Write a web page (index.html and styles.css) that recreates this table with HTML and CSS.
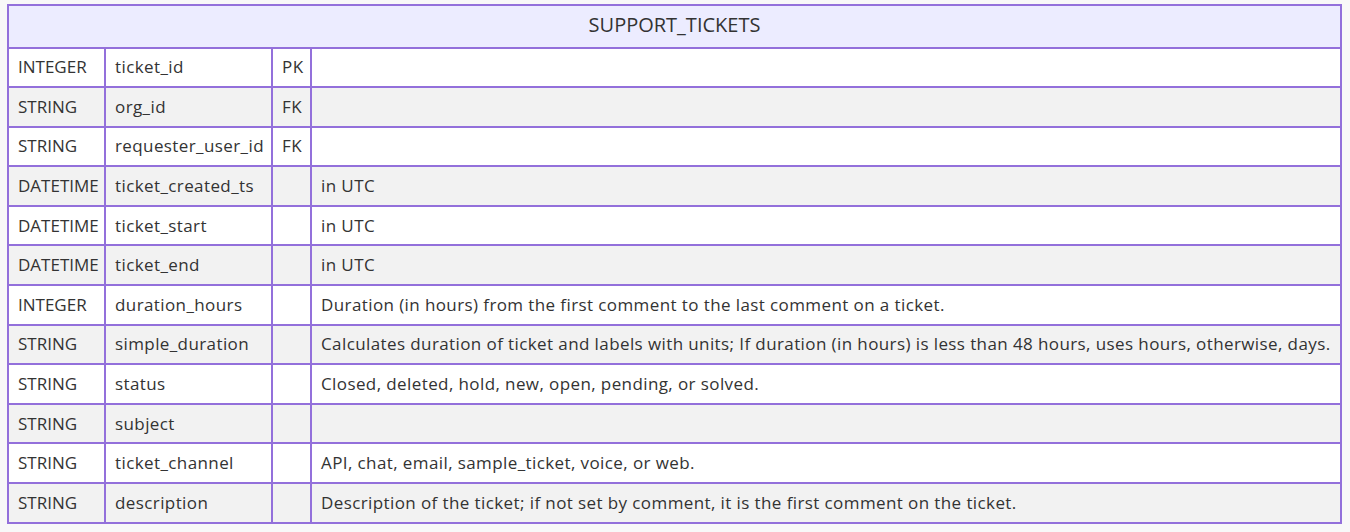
FILE: index.html
```html
<!DOCTYPE html>
<html>
<head>
<meta charset="utf-8">
<link rel="stylesheet" href="styles.css">
</head>
<body>
<div class="canvas">
<table class="entity">
  <colgroup>
    <col class="c-type"><col class="c-name"><col class="c-key"><col class="c-comment">
  </colgroup>
  <thead>
    <tr><th colspan="4" class="title">SUPPORT_TICKETS</th></tr>
  </thead>
  <tbody>
    <tr><td>INTEGER</td><td>ticket_id</td><td>PK</td><td></td></tr>
    <tr><td>STRING</td><td>org_id</td><td>FK</td><td></td></tr>
    <tr><td>STRING</td><td>requester_user_id</td><td>FK</td><td></td></tr>
    <tr><td>DATETIME</td><td>ticket_created_ts</td><td></td><td>in UTC</td></tr>
    <tr><td>DATETIME</td><td>ticket_start</td><td></td><td>in UTC</td></tr>
    <tr><td>DATETIME</td><td>ticket_end</td><td></td><td>in UTC</td></tr>
    <tr><td>INTEGER</td><td>duration_hours</td><td></td><td>Duration (in hours) from the first comment to the last comment on a ticket.</td></tr>
    <tr><td>STRING</td><td>simple_duration</td><td></td><td>Calculates duration of ticket and labels with units; If duration (in hours) is less than 48 hours, uses hours, otherwise, days.</td></tr>
    <tr><td>STRING</td><td>status</td><td></td><td>Closed, deleted, hold, new, open, pending, or solved.</td></tr>
    <tr><td>STRING</td><td>subject</td><td></td><td></td></tr>
    <tr><td>STRING</td><td>ticket_channel</td><td></td><td>API, chat, email, sample_ticket, voice, or web.</td></tr>
    <tr><td>STRING</td><td>description</td><td></td><td>Description of the ticket; if not set by comment, it is the first comment on the ticket.</td></tr>
  </tbody>
</table>
</div>
</body>
</html>
```
FILE: styles.css
```css
html, body {
  margin: 0;
  padding: 0;
  background: #f8f8f8;
}
.canvas {
  padding: 4px 0 0 7px;
}
.entity {
  border-collapse: collapse;
  table-layout: fixed;
  width: 1335px;
  font-family: "Open Sans", "Liberation Sans", Arial, sans-serif;
  font-size: 17px;
  letter-spacing: 0.4px;
  color: #333333;
}
.c-type { width: 97px; }
.c-name { width: 167px; }
.c-key { width: 39px; }
.c-comment { width: auto; }
.entity th, .entity td {
  border: 2px solid #9370db;
  padding: 0 0 0 9px;
  text-align: left;
  white-space: nowrap;
  overflow: hidden;
  font-weight: normal;
  line-height: 20px;
}
.entity .title {
  background: #ececff;
  height: 37.5px;
  text-align: center;
  font-size: 20px;
  letter-spacing: 0;
  padding: 0 0 3px 0;
}
.entity td {
  height: 37.6px;
}
.entity td:first-child {
  letter-spacing: 0;
}
.entity tbody tr:nth-child(odd) td { background: #ffffff; }
.entity tbody tr:nth-child(even) td { background: #f2f2f2; }
```
